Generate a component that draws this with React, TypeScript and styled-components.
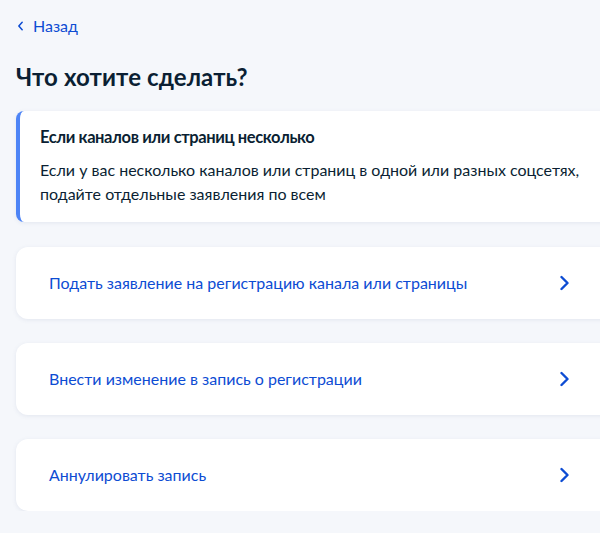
import React from "react";
import styled, { createGlobalStyle } from "styled-components";

const GlobalStyle = createGlobalStyle`
  html, body {
    margin: 0;
    padding: 0;
    background: #f5f7fb;
  }
  body {
    font-family: Lato, "Noto Sans", "Liberation Sans", sans-serif;
    color: #0b1f33;
  }
`;

const actions = [
  "Подать заявление на регистрацию канала или страницы",
  "Внести изменение в запись о регистрации",
  "Аннулировать запись",
];

const App: React.FC = () => (
  <>
    <GlobalStyle />
    <Page>
      <Back href="#">
        <BackIcon viewBox="0 0 8 12" aria-hidden>
          <path d="M6 1.5L2 6l4 4.5" />
        </BackIcon>
        Назад
      </Back>
      <Heading>Что хотите сделать?</Heading>

      <Info>
        <InfoTitle>Если каналов или страниц несколько</InfoTitle>
        <InfoText>
          Если у вас несколько каналов или страниц в одной или разных соцсетях,
          подайте отдельные заявления по всем
        </InfoText>
      </Info>

      <List>
        {actions.map((label) => (
          <Action key={label}>
            <ActionLabel>{label}</ActionLabel>
            <Chevron viewBox="0 0 10 16" aria-hidden>
              <path d="M2.5 2l6 6-6 6" />
            </Chevron>
          </Action>
        ))}
      </List>
    </Page>
  </>
);

export default App;

/* ----- styles ----- */
const Page = styled.div`
  width: 620px;
  padding: 15px 0 0 16px;
  box-sizing: border-box;
`;

const Back = styled.a`
  display: inline-flex;
  align-items: center;
  gap: 9px;
  height: 20px;
  font-size: 16px;
  line-height: 20px;
  color: #0d4cd3;
  text-decoration: none;
  padding-left: 1px;
`;

const BackIcon = styled.svg`
  width: 7px;
  height: 10px;
  fill: none;
  stroke: #0d4cd3;
  stroke-width: 1.8;
  stroke-linecap: round;
  stroke-linejoin: round;
`;

const Heading = styled.h1`
  margin: 25px 0 0;
  font-size: 24px;
  line-height: 32px;
  font-weight: 700;
  letter-spacing: 0.1px;
  color: #0b1f33;
`;

const Info = styled.div`
  margin-top: 18px;
  background: #fff;
  border-left: 4px solid #4d84f6;
  border-radius: 8px;
  padding: 14px 20px 16px 20px;
  box-shadow: 0 1px 4px rgba(102, 119, 153, 0.12);
`;

const InfoTitle = styled.div`
  font-size: 16.5px;
  line-height: 24px;
  font-weight: 700;
  letter-spacing: -0.4px;
  color: #0b1f33;
`;

const InfoText = styled.div`
  margin-top: 9px;
  font-size: 16px;
  line-height: 24px;
  color: #0b1f33;
  width: 560px;
`;

const List = styled.div`
  margin-top: 25px;
  display: flex;
  flex-direction: column;
  gap: 24px;
`;

const Action = styled.a`
  display: flex;
  align-items: center;
  justify-content: space-between;
  height: 72px;
  padding: 0 51px 0 33px;
  background: #fff;
  border-radius: 12px;
  box-shadow: 0 1px 4px rgba(102, 119, 153, 0.12);
  cursor: pointer;
`;

const ActionLabel = styled.span`
  font-size: 16px;
  line-height: 24px;
  color: #0d4cd3;
`;

const Chevron = styled.svg`
  width: 10px;
  height: 16px;
  fill: none;
  stroke: #0d4cd3;
  stroke-width: 2.4;
  stroke-linecap: round;
  stroke-linejoin: round;
`;
